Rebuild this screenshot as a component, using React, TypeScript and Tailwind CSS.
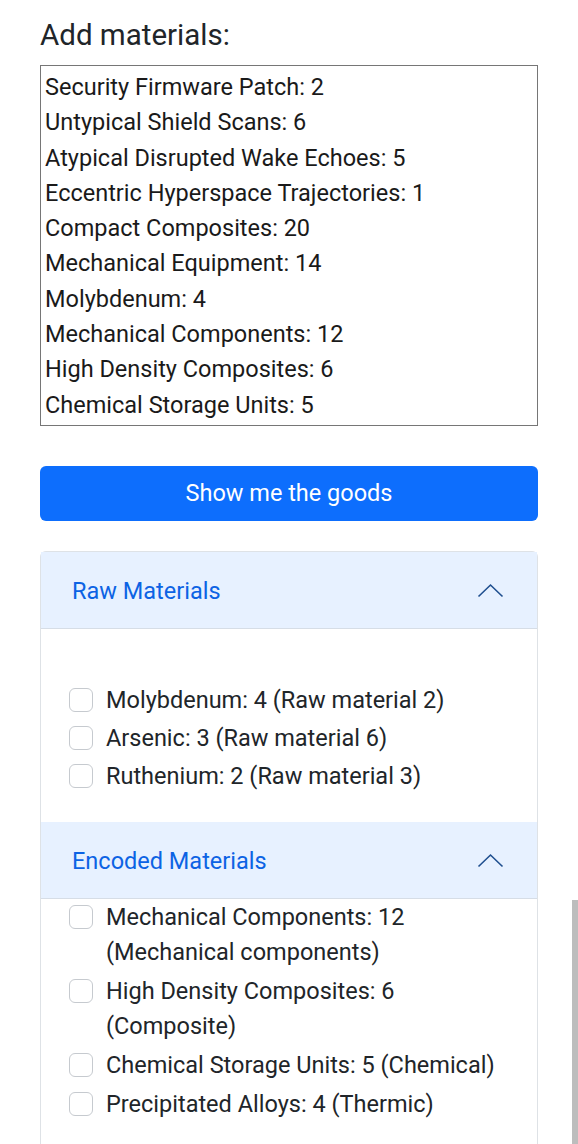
import React from 'react';

const materials = [
  'Security Firmware Patch: 2',
  'Untypical Shield Scans: 6',
  'Atypical Disrupted Wake Echoes: 5',
  'Eccentric Hyperspace Trajectories: 1',
  'Compact Composites: 20',
  'Mechanical Equipment: 14',
  'Molybdenum: 4',
  'Mechanical Components: 12',
  'High Density Composites: 6',
  'Chemical Storage Units: 5',
];

const raw = ['Molybdenum: 4 (Raw material 2)', 'Arsenic: 3 (Raw material 6)', 'Ruthenium: 2 (Raw material 3)'];

const encoded = [
  'Mechanical Components: 12 (Mechanical components)',
  'High Density Composites: 6 (Composite)',
  'Chemical Storage Units: 5 (Chemical)',
  'Precipitated Alloys: 4 (Thermic)',
];

function Chevron() {
  return (
    <svg width="27" height="16" viewBox="0 0 27 16" fill="none">
      <path d="M1.5 14.5 L13.5 3 L25.5 14.5" stroke="#1f4f8f" strokeWidth="1.6" />
    </svg>
  );
}

function Check({ label }: { label: string }) {
  return (
    <div className="flex items-start gap-[13px]">
      <span className="mt-[5px] h-[24px] w-[24px] shrink-0 rounded-[6px] border border-[#c6cacf] bg-white" />
      <span>{label}</span>
    </div>
  );
}

function Header({ title }: { title: string }) {
  return (
    <div className="flex h-[77px] items-center justify-between border-b border-[#d6dde6] bg-[#e7f1ff] pl-[31px] pr-[33px] text-[#0c63e4]">
      <span className="pt-[3px]">{title}</span>
      <Chevron />
    </div>
  );
}

export default function App() {
  return (
    <div className="relative h-[1144px] overflow-hidden bg-white px-[40px] pt-[17px] text-[23.5px] text-[#212529] [font-family:Roboto,'Liberation_Sans',sans-serif]">
      <h2 className="text-[29.5px] leading-[36px]">Add materials:</h2>
      <div className="mt-[12px] h-[361px] border border-[#767676] px-[4px] pt-[4px] leading-[35.3px] text-[#1a1a1a]">
        {materials.map((m) => (
          <div key={m}>{m}</div>
        ))}
      </div>

      <button className="mt-[40px] h-[55px] w-full rounded-[6px] bg-[#0d6efd] text-white">Show me the goods</button>

      <div className="mt-[30px] rounded-t-[6px] border border-[#dee2e6]">
        <Header title="Raw Materials" />
        <div className="flex h-[193px] flex-col gap-[3px] px-[28px] pt-[54px] leading-[35px]">
          {raw.map((r) => (
            <Check key={r} label={r} />
          ))}
        </div>
        <Header title="Encoded Materials" />
        <div className="flex flex-col gap-[4px] pb-[60px] pl-[28px] pr-[30px] pt-[1px] leading-[35px]">
          {encoded.map((r) => (
            <Check key={r} label={r} />
          ))}
        </div>
      </div>

      <div className="absolute right-0 top-[900px] h-[244px] w-[6px] bg-[#bdbdbd]" />
    </div>
  );
}
